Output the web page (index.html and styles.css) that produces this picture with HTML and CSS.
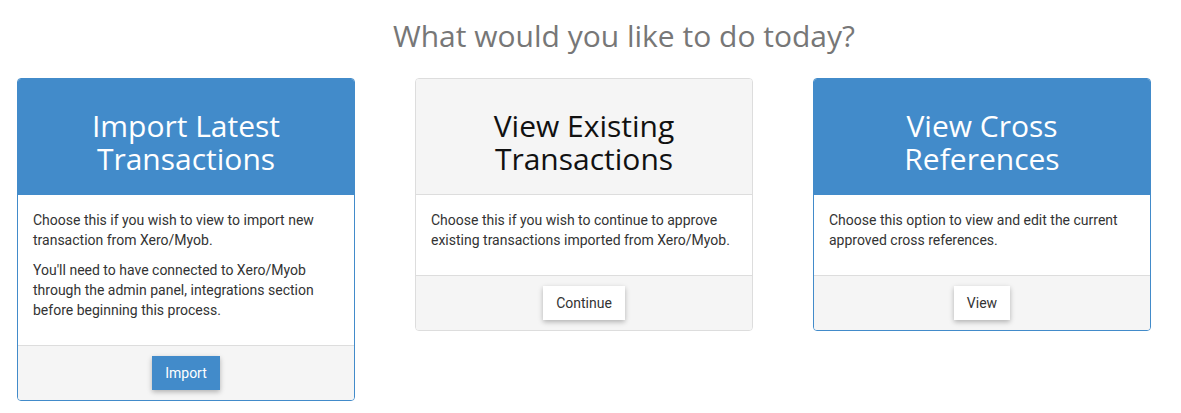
FILE: index.html
```html
<!DOCTYPE html>
<html>
<head>
<meta charset="utf-8">
<link rel="stylesheet" href="styles.css">
</head>
<body>
<h1 class="page-title">What would you like to do today?</h1>
<div class="cards">
  <div class="card card-primary">
    <div class="card-heading"><h3 class="card-title">Import Latest Transactions</h3></div>
    <div class="card-body">
      <p>Choose this if you wish to view to import new transaction from Xero/Myob.</p>
      <p>You'll need to have connected to Xero/Myob through the admin panel, integrations section before beginning this process.</p>
    </div>
    <div class="card-footer"><button class="btn btn-primary">Import</button></div>
  </div>
  <div class="card card-default">
    <div class="card-heading"><h3 class="card-title">View Existing Transactions</h3></div>
    <div class="card-body">
      <p>Choose this if you wish to continue to approve existing transactions imported from Xero/Myob.</p>
    </div>
    <div class="card-footer"><button class="btn btn-default">Continue</button></div>
  </div>
  <div class="card card-primary">
    <div class="card-heading"><h3 class="card-title">View Cross References</h3></div>
    <div class="card-body">
      <p>Choose this option to view and edit the current approved cross references.</p>
    </div>
    <div class="card-footer"><button class="btn btn-default">View</button></div>
  </div>
</div>
</body>
</html>
```
FILE: styles.css
```css
* { box-sizing: border-box; }
html, body { margin: 0; padding: 0; background: #fff; }
body {
  font-family: Roboto, "Liberation Sans", sans-serif;
  font-size: 14px;
  line-height: 20px;
  color: #333;
}
.page-title {
  margin: 19px 0 0 0;
  padding-left: 67px;
  text-align: center;
  font-family: "Open Sans", "DejaVu Sans", sans-serif;
  font-weight: 400;
  font-size: 30px;
  line-height: 33px;
  color: #777;
}
.cards {
  display: flex;
  align-items: flex-start;
  gap: 60px;
  margin-top: 26px;
  padding-left: 17px;
}
.card {
  width: 338px;
  border: 1px solid #ddd;
  border-radius: 4px;
  background: #fff;
  overflow: hidden;
}
.card-primary { border-color: #428bca; }
.card-heading {
  padding: 10px 15px;
  text-align: center;
  background: #f5f5f5;
  border-bottom: 1px solid #ddd;
}
.card-primary .card-heading {
  background: #428bca;
  border-bottom-color: #428bca;
  color: #fff;
}
.card-title {
  margin: 20px 0 9px;
  font-family: "Open Sans", "DejaVu Sans", sans-serif;
  font-weight: 400;
  font-size: 30px;
  line-height: 33px;
  color: #111;
}
.card-primary .card-title { color: #fff; }
.card-body { padding: 15px 15px 15px 15px; }
.card-body p { margin: 0 0 10px; }
.card-footer {
  padding: 10px 15px;
  background: #f5f5f5;
  border-top: 1px solid #ddd;
  text-align: center;
}
.btn {
  font-family: Roboto, "Liberation Sans", sans-serif;
  font-size: 14px;
  line-height: 20px;
  padding: 6px 12px;
  border: 1px solid transparent;
  border-radius: 0;
  box-shadow: 0 2px 5px 0 rgba(0,0,0,0.28);
  cursor: pointer;
}
.btn-primary { background: #428bca; color: #fff; border-color: #428bca; }
.btn-default { background: #fff; color: #333; border-color: #fff; }
```
